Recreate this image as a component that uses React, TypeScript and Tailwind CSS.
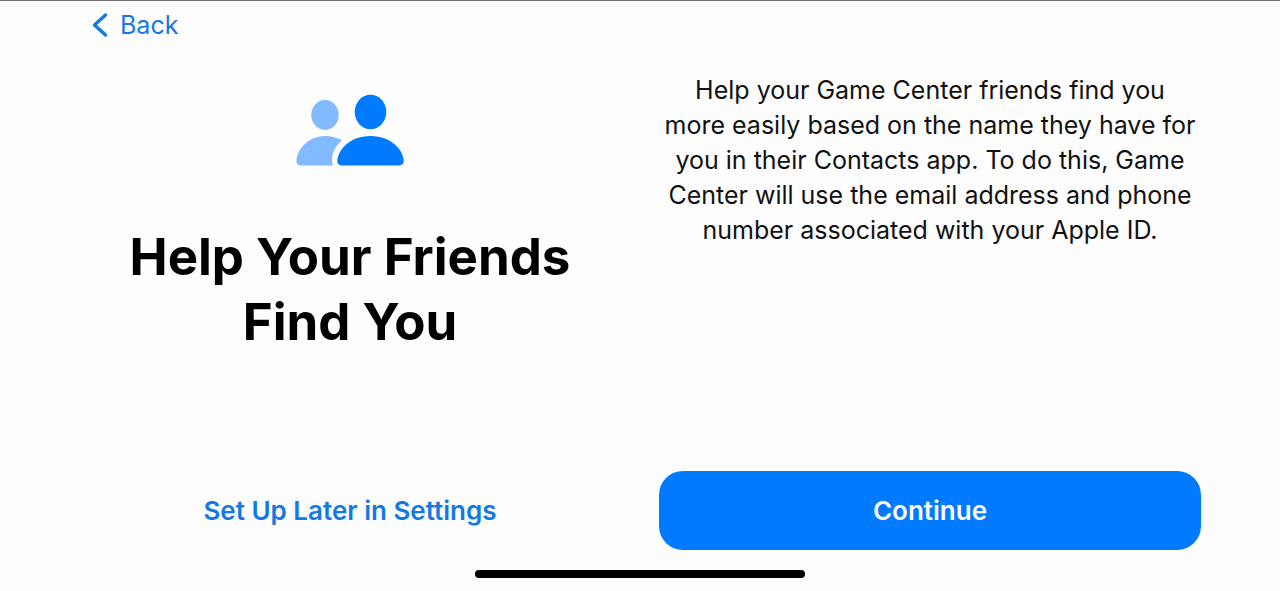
function FriendsIcon() {
  return (
    <svg width="108" height="72" viewBox="0 0 108 72" aria-hidden="true">
      <g fill="#82BAFF">
        <ellipse cx="29" cy="21" rx="13.7" ry="15" />
        <path d="M4.5 71.5C2 71.5 0.5 70 0.5 67.5C0.5 56.5 11.5 42 29 42C35.5 42 41.500 43.700 46 46.500C40 51 36.200 58.500 36 65C35.900 67.500 36.200 69.500 37 71.500Z" />
      </g>
      <g fill="#007AFF">
        <ellipse cx="74.500" cy="18" rx="15.800" ry="17.200" />
        <path d="M46.500 71.500C43 71.500 41.300 70 41.300 67.300C41.300 57 53 42 74.500 42C96 42 107.700 57 107.700 67.300C107.700 70 106 71.500 102.500 71.500Z" />
      </g>
    </svg>
  );
}

export default function App() {
  return (
    <div className="flex min-h-screen flex-col border-t border-[#6e6e6e] bg-[#fdfdfd] font-[Inter,sans-serif] text-[25px]">
      <header className="flex px-[92px] pt-1">
        <button type="button" className="flex items-center gap-3 leading-10 text-[#1479e4]">
          <svg width="16" height="26" viewBox="0 0 16 26" fill="none" stroke="currentColor" strokeWidth="3.4" strokeLinecap="round" strokeLinejoin="round" aria-hidden="true">
            <path d="M13.500 3L2.500 13L13.500 23" />
          </svg>
          Back
        </button>
      </header>

      <main className="grid grow grid-cols-2 gap-x-[38px] px-[79px] text-center">
        <section className="flex flex-col items-center gap-[58px] pt-[49px]">
          <FriendsIcon />
          <h1 className="text-[51px] leading-[65px] font-bold text-black">
            Help Your Friends
            <br />
            Find You
          </h1>
        </section>
        <p className="pt-7 leading-[35px] text-[#111]">
          Help your Game Center friends find you
          <br />
          more easily based on the name they have for
          <br />
          you in their Contacts app. To do this, Game
          <br />
          Center will use the email address and phone
          <br />
          number associated with your Apple ID.
        </p>
      </main>

      <footer className="flex flex-col items-center gap-5 pb-[13px]">
        <div className="grid w-full grid-cols-2 gap-x-[38px] px-[79px] text-[26px] font-semibold">
          <button type="button" className="text-[#1479e4]">
            Set Up Later in Settings
          </button>
          <button type="button" className="h-[79px] rounded-3xl bg-[#007AFF] text-white">
            Continue
          </button>
        </div>
        <div className="h-2 w-[330px] rounded-full bg-black" />
      </footer>
    </div>
  );
}
